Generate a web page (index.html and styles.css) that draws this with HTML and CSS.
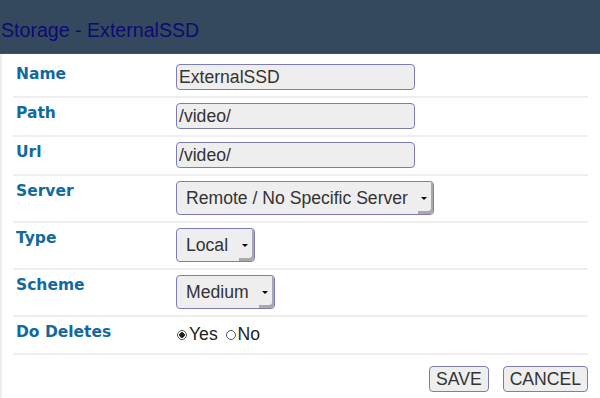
FILE: index.html
```html
<!DOCTYPE html>
<html lang="en">
<head>
    <meta charset="UTF-8">
    <meta name="viewport" content="width=device-width, initial-scale=1.0">
    <title>Storage - ExternalSSD</title>
    <link rel="stylesheet" href="styles.css">
</head>
<body>
    <div class="header">
        <h1>Storage - ExternalSSD</h1>
    </div>
    <form class="panel">
        <div class="row">
            <label class="field-label" for="name">Name</label>
            <div class="field"><input type="text" id="name" value="ExternalSSD"></div>
        </div>
        <div class="row">
            <label class="field-label" for="path">Path</label>
            <div class="field"><input type="text" id="path" value="/video/"></div>
        </div>
        <div class="row">
            <label class="field-label" for="url">Url</label>
            <div class="field"><input type="text" id="url" value="/video/"></div>
        </div>
        <div class="row">
            <label class="field-label" for="server">Server</label>
            <div class="field">
                <span class="select-wrap">
                    <select id="server">
                        <option>Remote / No Specific Server</option>
                    </select>
                </span>
            </div>
        </div>
        <div class="row">
            <label class="field-label" for="type">Type</label>
            <div class="field">
                <span class="select-wrap">
                    <select id="type">
                        <option>Local</option>
                        <option>NFS</option>
                    </select>
                </span>
            </div>
        </div>
        <div class="row">
            <label class="field-label" for="scheme">Scheme</label>
            <div class="field">
                <span class="select-wrap">
                    <select id="scheme">
                        <option>Low</option>
                        <option selected>Medium</option>
                        <option>High</option>
                    </select>
                </span>
            </div>
        </div>
        <div class="row">
            <span class="field-label">Do Deletes</span>
            <div class="field radios">
                <label><input type="radio" name="deletes" checked>Yes</label>
                <label><input type="radio" name="deletes">No</label>
            </div>
        </div>
        <div class="actions">
            <button type="button">SAVE</button>
            <button type="button">CANCEL</button>
        </div>
    </form>
</body>
</html>
```

FILE: styles.css
```css
body {
    margin: 0;
    font-family: 'Liberation Sans', Arial, sans-serif;
    background-color: white;
}

.header {
    height: 54px;
    box-sizing: border-box;
    padding: 19px 0 0 1px;
    background-color: #35495e;
    border-bottom: 1px solid #4f4f4f;
}

.header h1 {
    margin: 0;
    font-size: 19.6px;
    font-weight: normal;
    line-height: 22px;
    color: #0b0b72;
}

.panel {
    box-sizing: border-box;
    min-height: calc(100vh - 54px);
    padding: 5px 12px 0 11px;
    border-left: 2px solid #eeeeee;
}

.row {
    display: grid;
    grid-template-columns: 163px 1fr;
    align-items: start;
    padding: 5px 0 6px;
    border-bottom: 2px solid #eeeeee;
}

.field-label {
    padding: 1px 0 0 3px;
    font-family: 'DejaVu Sans', Verdana, sans-serif;
    font-size: 15.5px;
    font-weight: bold;
    line-height: 18px;
    color: #12699d;
}

input[type="text"] {
    width: 239px;
    height: 26px;
    box-sizing: border-box;
    margin: 0;
    padding: 0 2px;
    border: 1px solid #7d7db5;
    border-radius: 4px;
    background-color: #eeeeee;
    font-family: 'Liberation Sans', Arial, sans-serif;
    font-size: 17.6px;
    color: #333;
}

.select-wrap {
    position: relative;
    display: inline-block;
    vertical-align: top;
}

.select-wrap select {
    -webkit-appearance: none;
    appearance: none;
    height: 34px;
    margin: 0;
    padding: 0 25px 0 9px;
    border: 1px solid #7d7db5;
    border-radius: 4px;
    background-color: #eeeeee;
    font-family: 'Liberation Sans', Arial, sans-serif;
    font-size: 17.6px;
    color: #333;
}

/* dropdown button drawn over the right end of the select */
.select-wrap::after {
    content: '';
    position: absolute;
    top: 1px;
    right: 1px;
    bottom: 1px;
    width: 15px;
    border-radius: 0 3px 3px 0;
    box-shadow: inset -2px -3px 0 #a9a9a9;
    pointer-events: none;
}

.select-wrap::before {
    content: '';
    position: absolute;
    top: 50%;
    right: 7px;
    margin-top: -1px;
    border-left: 3px solid transparent;
    border-right: 3px solid transparent;
    border-top: 3px solid #000;
    z-index: 1;
    pointer-events: none;
}

.radios {
    line-height: 25px;
    font-size: 17.6px;
    color: #222;
}

.radios label + label {
    margin-left: 2px;
}

.radios input {
    -webkit-appearance: none;
    appearance: none;
    width: 10px;
    height: 10px;
    margin: 0 2px 0 1px;
    border: 1px solid #555;
    border-radius: 50%;
    background-color: white;
    vertical-align: 0;
}

.radios input:checked {
    background: radial-gradient(circle, #222 0 2.5px, white 3px);
}

.actions {
    display: flex;
    justify-content: flex-end;
    gap: 14px;
    padding-top: 11px;
}

button {
    height: 26px;
    padding: 0 6px;
    border: 1px solid #7d7db5;
    border-radius: 4px;
    background-color: #eeeeee;
    font-family: 'Liberation Sans', Arial, sans-serif;
    font-size: 17.6px;
    color: #333;
    cursor: pointer;
}
```
